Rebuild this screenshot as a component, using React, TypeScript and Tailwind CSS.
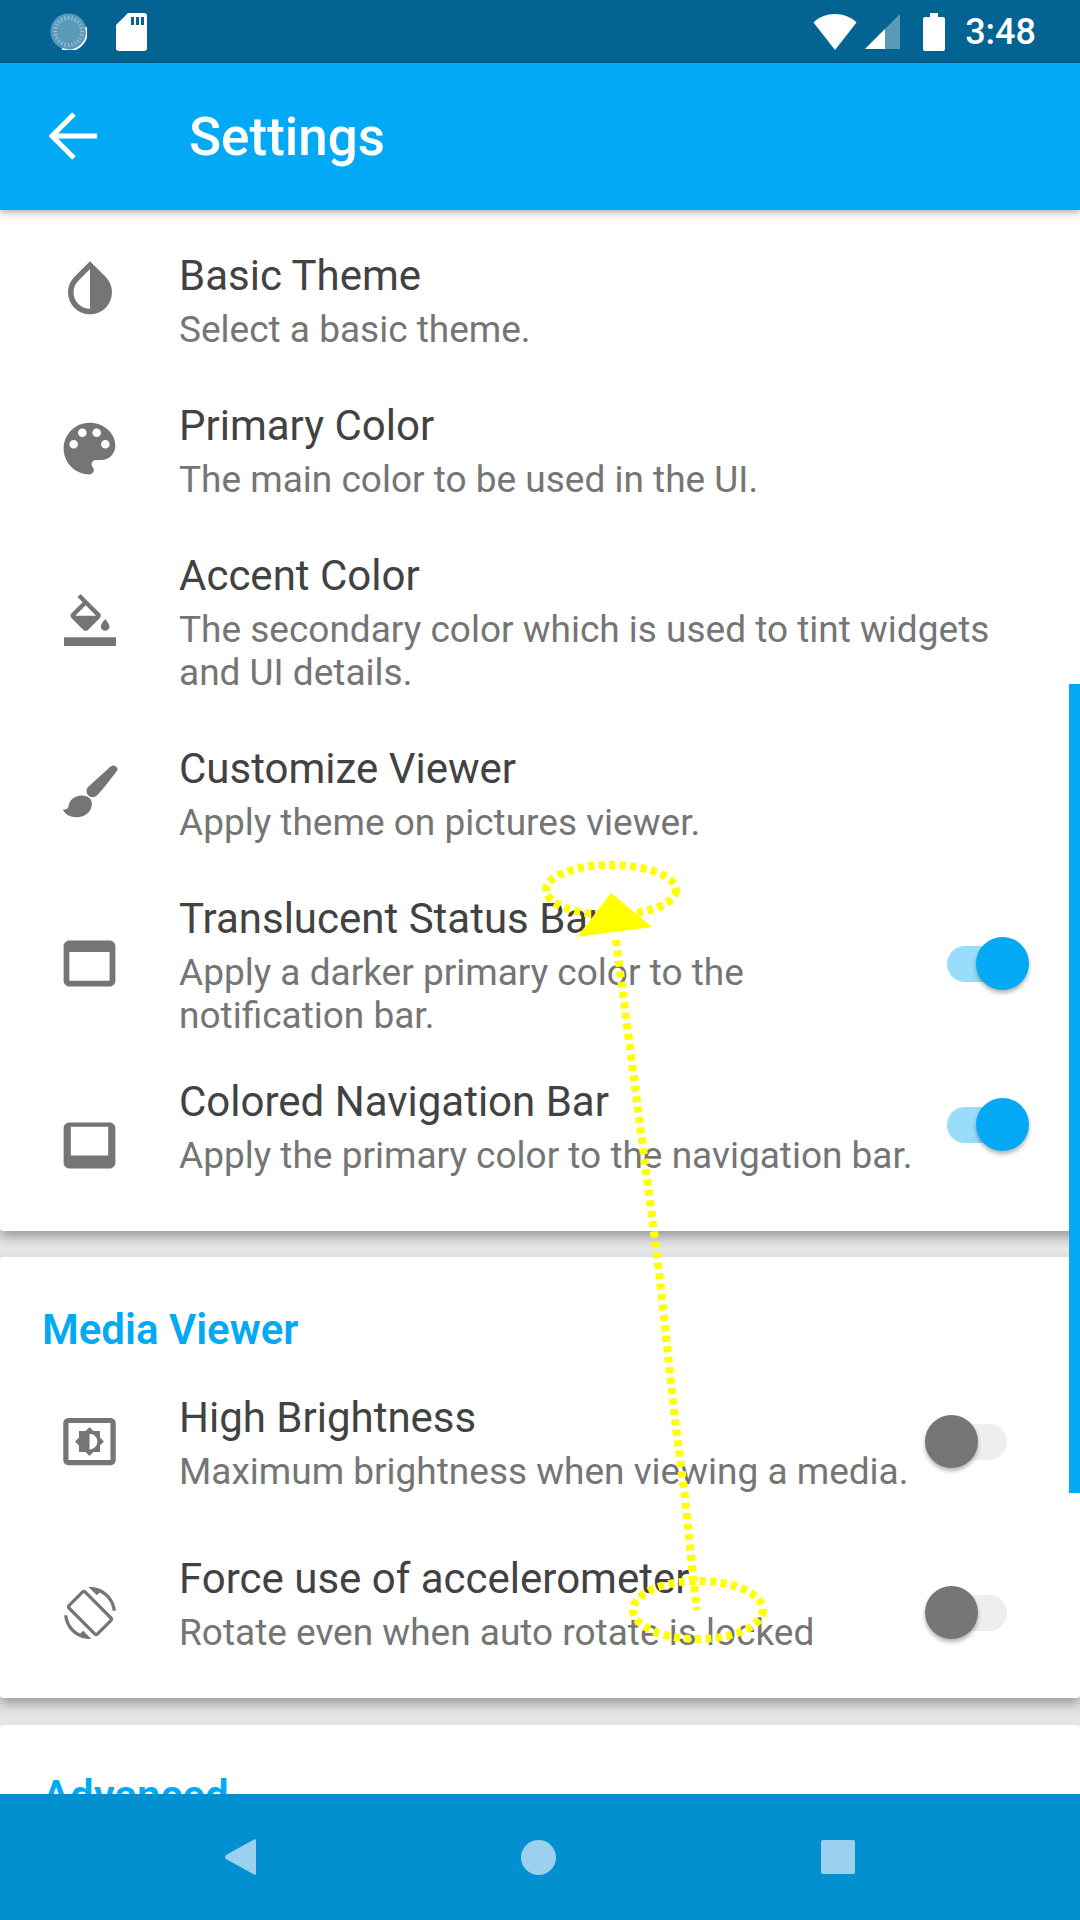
import React from "react";

const ICONS = {
  theme: "M17.66 7.93L12 2.27 6.34 7.93c-3.12 3.12-3.12 8.19 0 11.31C7.9 20.8 9.95 21.58 12 21.58c2.05 0 4.1-.78 5.66-2.34 3.12-3.12 3.12-8.19 0-11.31zM12 19.59c-1.6 0-3.11-.62-4.24-1.76C6.62 16.69 6 15.19 6 13.59s.62-3.11 1.76-4.24L12 5.1v14.49z",
  palette: "M12 3c-4.97 0-9 4.03-9 9s4.03 9 9 9c.83 0 1.5-.67 1.5-1.5 0-.39-.15-.74-.39-1.01-.23-.26-.38-.61-.38-.99 0-.83.67-1.5 1.5-1.5H16c2.76 0 5-2.24 5-5 0-4.42-4.03-8-9-8zm-5.5 9c-.83 0-1.5-.67-1.5-1.5S5.67 9 6.5 9 8 9.67 8 10.5 7.33 12 6.5 12zm3-4C8.67 8 8 7.33 8 6.5S8.67 5 9.5 5s1.5.67 1.5 1.5S10.33 8 9.5 8zm5 0c-.83 0-1.5-.67-1.5-1.5S13.67 5 14.5 5s1.5.67 1.5 1.5S15.33 8 14.5 8zm3 4c-.83 0-1.5-.67-1.5-1.5S16.67 9 17.5 9s1.5.67 1.5 1.5-.67 1.5-1.5 1.5z",
  fill: "M16.56 8.94L7.62 0 6.21 1.41l2.38 2.38-5.15 5.15c-.59.59-.59 1.54 0 2.12l5.5 5.5c.29.29.68.44 1.06.44s.77-.15 1.06-.44l5.5-5.5c.59-.58.59-1.53 0-2.12zM5.21 10L10 5.21 14.79 10H5.21zM19 11.5s-2 2.17-2 3.5c0 1.1.9 2 2 2s2-.9 2-2c0-1.33-2-3.5-2-3.5zM0 20h24v4H0z",
  brush: "M8 13.6c-3 0-4.6 1.9-4.8 3.6-.2 1.500-1.400 1.700-2.200 1.400.7 1.900 2.800 2.900 4.900 2.900 3.400 0 5.700-2.100 5.700-5 0-1.700-1.500-2.900-3.600-2.900zM20.300 3.100c-.7-.6-1.500-.3-2.100.2l-7.800 7.100c-1.100 1-.9 2.300-.2 3.100.9.900 2.200 1 3.200.1 2-1.900 5.700-6.800 7.200-8.800.5-.6.4-1.200-.3-1.700z",
  statusBar: "M19 4H5c-1.11 0-2 .9-2 2v12c0 1.1.89 2 2 2h14c1.1 0 2-.9 2-2V6c0-1.1-.89-2-2-2zm0 14H5V8h14v10z",
  navBar: "M19 4H5c-1.11 0-2 .9-2 2v12c0 1.1.89 2 2 2h14c1.1 0 2-.9 2-2V6c0-1.1-.89-2-2-2zm-.5 11.500h-13v-10h13z",
  brightness: "M20 3H4c-1.11 0-2 .89-2 2v14c0 1.11.89 2 2 2h16c1.11 0 2-.89 2-2V5c0-1.11-.89-2-2-2zm0 16.02H4V4.98h16v14.04zM8 16h2.5l1.5 1.5 1.5-1.5H16v-2.5l1.5-1.5-1.5-1.5V8h-2.5L12 6.5 10.5 8H8v2.5L6.5 12 8 13.5V16zm4-7c1.66 0 3 1.34 3 3s-1.34 3-3 3V9z",
  rotate: "M16.48 2.52c3.27 1.55 5.61 4.72 5.97 8.48h1.5C23.44 4.84 18.29 0 12 0l-.66.03 3.81 3.81 1.33-1.32zm-6.25-.77c-.59-.59-1.54-.59-2.12 0L1.75 8.11c-.59.59-.59 1.54 0 2.12l12.02 12.02c.59.59 1.54.59 2.12 0l6.36-6.36c.59-.59.59-1.54 0-2.12L10.23 1.75zm4.6 19.44L2.81 9.17l6.36-6.36 12.02 12.02-6.36 6.36zm-7.31.29C4.25 19.94 1.91 16.76 1.55 13H.05C.56 19.16 5.71 24 12 24l.66-.03-3.81-3.81-1.33 1.32z",
};

const Icon = ({ d, size }: { d: string; size: string }) => (
  <svg viewBox="0 0 24 24" className={`${size} fill-[#757575]`}>
    <path d={d} />
  </svg>
);

const Switch = ({ on, offset }: { on: boolean; offset: string }) => (
  <div className={`relative w-[104px] h-[53px] shrink-0 ${offset}`}>
    <div className={`absolute left-[22px] top-[9px] w-[60px] h-[36px] rounded-full ${on ? "bg-[#9adcfb]" : "bg-[#eeeeee]"}`} />
    <div
      className={`absolute top-0 w-[53px] h-[53px] rounded-full shadow-[0_3px_4px_rgba(0,0,0,0.3)] ${
        on ? "right-0 bg-[#03a9f4]" : "left-0 bg-[#757575]"
      }`}
    />
  </div>
);

interface RowProps {
  height: string;
  iconOffset: string;
  iconSize: string;
  d: string;
  title: string;
  desc: string;
  toggle?: { on: boolean; offset: string };
}

const Row = ({ height, iconOffset, iconSize, d, title, desc, toggle }: RowProps) => (
  <div className={`flex items-start pl-[55px] pr-[51px] ${height}`}>
    <div className={`w-[69px] h-[69px] shrink-0 flex items-center justify-center ${iconOffset}`}>
      <Icon d={d} size={iconSize} />
    </div>
    <div className="flex-1 min-w-0 ml-[55px] pt-[9px]">
      <div className="text-[42px] leading-[48px] text-[#424242]">{title}</div>
      <div className="mt-2 text-[37px] leading-[43px] text-[#757575]">{desc}</div>
    </div>
    {toggle && <Switch on={toggle.on} offset={toggle.offset} />}
  </div>
);

const LoaderIcon = () => (
  <svg viewBox="0 0 37 37" className="w-[37px] h-[37px]">
    <circle cx="18.5" cy="18.5" r="18" fill="#ffffff" fillOpacity="0.35" />
    {Array.from({ length: 24 }).map((_, i) => (
      <line
        key={i}
        x1="18.5"
        y1="3"
        x2="18.5"
        y2="7"
        stroke="#ffffff"
        strokeOpacity="0.35"
        strokeWidth="1.4"
        transform={`rotate(${i * 15} 18.5 18.5)`}
      />
    ))}
    <path d="M36 14a18 18 0 0 1-24 22" fill="none" stroke="#ffffff" strokeWidth="2" />
  </svg>
);

export default function App() {
  return (
    <div className="relative w-[1080px] h-[1920px] flex flex-col overflow-hidden bg-[#e5e5e5] font-['Roboto',sans-serif]">
      {/* status bar */}
      <div className="h-[63px] shrink-0 bg-[#036493] flex items-center pl-[50px] pr-[44px]">
        <LoaderIcon />
        <svg viewBox="0 0 31 38" className="w-[31px] h-[38px] ml-[29px] fill-white">
          <path d="M12 0h16a3 3 0 0 1 3 3v32a3 3 0 0 1-3 3H3a3 3 0 0 1-3-3V12zM15 4v8h3V4zm5 0v8h3V4zm5 0v8h3V4z" fillRule="evenodd" />
        </svg>
        <div className="flex-1" />
        <svg viewBox="0 0 44 36" className="w-[44px] h-[36px] fill-white">
          <path d="M22 36L0.5 8.5C6 3 13.5 0 22 0s16 3 21.5 8.500z" />
        </svg>
        <svg viewBox="0 0 35 35" className="w-[35px] h-[35px] ml-[8px]">
          <path d="M35 0v35H0z" fill="#ffffff" fillOpacity="0.35" />
          <path d="M20 15v20H0z" fill="#ffffff" />
        </svg>
        <svg viewBox="0 0 22 38" className="w-[22px] h-[38px] ml-[23px] fill-white">
          <path d="M7 0h8v4h5a2 2 0 0 1 2 2v30a2 2 0 0 1-2 2H2a2 2 0 0 1-2-2V6a2 2 0 0 1 2-2h5z" />
        </svg>
        <span className="ml-[20px] text-[36px] font-medium text-white leading-none">3:48</span>
      </div>

      {/* app bar */}
      <div className="relative z-10 h-[147px] shrink-0 bg-[#03a9f4] flex items-center pl-[49px] shadow-[0_2px_8px_rgba(0,0,0,0.35)]">
        <svg viewBox="0 0 48 48" className="w-[48px] h-[48px] -mt-[2px]" fill="none" stroke="#ffffff" strokeWidth="5">
          <path d="M48 24H4M25 2L3 24l22 22" />
        </svg>
        <span className="ml-[92px] mt-[3px] text-[53px] font-medium text-white">Settings</span>
      </div>

      {/* settings list */}
      <main className="relative flex-1 min-h-0 overflow-hidden">
        <div className="bg-white pt-[33px] rounded-b-[3px] shadow-[0_6px_12px_rgba(0,0,0,0.32)]">
          <Row height="h-[150px]" iconOffset="mt-[10.5px]" iconSize="w-[66px] h-[66px]" d={ICONS.theme} title="Basic Theme" desc="Select a basic theme." />
          <Row height="h-[150px]" iconOffset="mt-[20.5px]" iconSize="w-[69px] h-[69px]" d={ICONS.palette} title="Primary Color" desc="The main color to be used in the UI." />
          <Row height="h-[193px]" iconOffset="mt-[42.5px]" iconSize="w-[52px] h-[52px]" d={ICONS.fill} title="Accent Color" desc="The secondary color which is used to tint widgets and UI details." />
          <Row height="h-[150px]" iconOffset="mt-[20.5px]" iconSize="w-[66px] h-[66px] translate-x-[3px]" d={ICONS.brush} title="Customize Viewer" desc="Apply theme on pictures viewer." />
          <Row height="h-[183px]" iconOffset="mt-[42.5px]" iconSize="w-[69px] h-[69px]" d={ICONS.statusBar} title="Translucent Status Bar" desc="Apply a darker primary color to the notification bar." toggle={{ on: true, offset: "mt-[51px]" }} />
          <Row height="h-[162px]" iconOffset="mt-[41.5px]" iconSize="w-[69px] h-[69px]" d={ICONS.navBar} title="Colored Navigation Bar" desc="Apply the primary color to the navigation bar." toggle={{ on: true, offset: "mt-[29px]" }} />
        </div>

        <div className="mt-[26px] bg-white pt-[49px] rounded-[3px] shadow-[0_6px_12px_rgba(0,0,0,0.32)]">
          <div className="pl-[42px] mb-[31px] text-[42px] leading-[48px] font-semibold text-[#03a9f4]">Media Viewer</div>
          <Row height="h-[161px]" iconOffset="mt-[21.5px]" iconSize="w-[63px] h-[63px]" d={ICONS.brightness} title="High Brightness" desc="Maximum brightness when viewing a media." toggle={{ on: false, offset: "mt-[30px]" }} />
          <Row height="h-[152px]" iconOffset="mt-[32.5px]" iconSize="w-[52px] h-[52px]" d={ICONS.rotate} title="Force use of accelerometer" desc="Rotate even when auto rotate is locked" toggle={{ on: false, offset: "mt-[40px]" }} />
        </div>

        <div className="mt-[27px] bg-white pt-[47px] pb-[40px] rounded-[3px]">
          <div className="pl-[42px] text-[42px] leading-[48px] font-semibold text-[#03a9f4]">Advanced</div>
        </div>

        {/* scrollbar */}
        <div className="absolute right-0 top-[474px] w-[11px] h-[809px] bg-[#03a9f4]" />
      </main>

      {/* navigation bar */}
      <div className="h-[126px] shrink-0 bg-[#0390d0] flex items-center justify-center gap-[265px] z-10">
        <svg viewBox="0 0 31 36" className="w-[31px] h-[36px] fill-[#9bd1ee]">
          <path d="M31 1.5v33c0 1.3-1.2 1.8-2 .9L1 20c-1.300-1.200-1.300-2.800 0-4L29 .6c.8-.9 2-.4 2 .9z" />
        </svg>
        <div className="w-[35px] h-[35px] rounded-full bg-[#9bd1ee]" />
        <div className="w-[34px] h-[34px] rounded-[2px] bg-[#9bd1ee]" />
      </div>

      {/* yellow gesture annotation drawn over the screenshot */}
      <svg viewBox="0 0 1080 1920" className="absolute inset-0 z-20 w-[1080px] h-[1920px] pointer-events-none" fill="none" stroke="#ffff00" strokeWidth="8" strokeDasharray="6 4.500">
        <ellipse cx="611" cy="890" rx="65" ry="25" />
        <ellipse cx="698" cy="1610" rx="65" ry="29" />
        <path d="M616 940L655 1240L660 1280L675 1420L685 1497L692 1567L697 1610" />
        <path d="M611 893L577 937L652 927z" fill="#ffff00" stroke="none" />
      </svg>
    </div>
  );
}
